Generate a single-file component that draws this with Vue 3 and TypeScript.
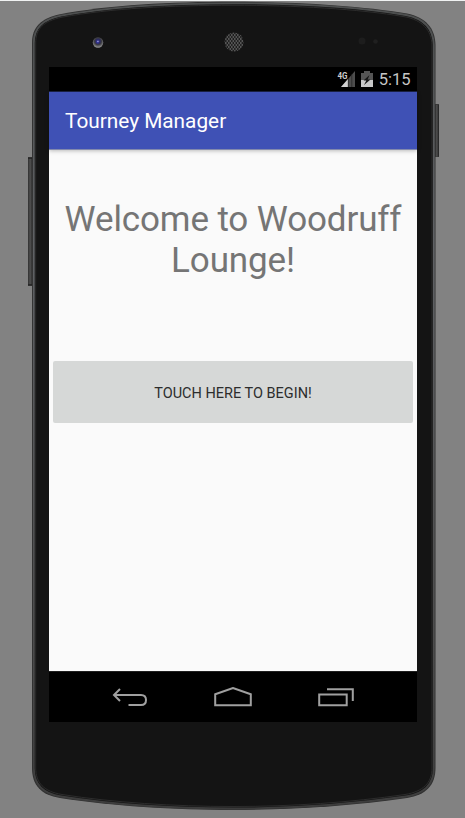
<script setup lang="ts">
const appTitle: string = 'Tourney Manager'
const clock: string = '5:15'
</script>

<template>
  <main class="stage">
    <svg class="device" viewBox="0 0 465 818" aria-hidden="true">
      <defs>
        <linearGradient id="side" x1="0" y1="0" x2="1" y2="0">
          <stop offset="0" stop-color="#303030" />
          <stop offset=".45" stop-color="#505050" />
          <stop offset="1" stop-color="#1e1e1e" />
        </linearGradient>
        <linearGradient id="rim" x1="0" y1="0" x2="0" y2="1">
          <stop offset="0" stop-color="#4c4e4e" />
          <stop offset=".3" stop-color="#606265" />
          <stop offset=".8" stop-color="#4c4c4c" />
          <stop offset="1" stop-color="#3c3c3c" />
        </linearGradient>
        <radialGradient id="lens" cx=".5" cy=".38" r=".62">
          <stop offset="0" stop-color="#5555b0" />
          <stop offset=".3" stop-color="#29295f" />
          <stop offset=".55" stop-color="#3c3c42" />
          <stop offset="1" stop-color="#9a9a9a" />
        </radialGradient>
        <pattern id="mesh" width="3" height="4" patternUnits="userSpaceOnUse">
          <rect width="3" height="4" fill="#555" />
          <circle cx=".8" cy="1" r=".9" fill="#171717" />
          <circle cx="2.3" cy="3" r=".9" fill="#171717" />
        </pattern>
      </defs>
      <rect x="28" y="157.500" width="5" height="128" fill="url(#side)" />
      <path d="M28 158h5M28 285h5M435 105h4M435 156h4" stroke="#222" stroke-width="1.500" />
      <rect x="435" y="105" width="4" height="51.500" fill="url(#side)" />
      <path
        d="M32 43C32 27 41 18.500 60 14.300C109 5 171 1.800 233 1.800C295 1.800 360 5.500 407 13.500C426 17.500 435 28 435.500 45V768C435.500 785 426 795 407 798C352 806 292 810 233 810C174 810 111 806 60 798C41 795 32 785 32 768Z"
        fill="#303030"
      />
      <path
        d="M33.800 43C33.800 28 42 19.800 61 15.700C110 6.500 171 3.300 233 3.300C295 3.300 359 7 406 15C424 18.500 433.300 29 433.800 45V768C433.800 784 425 793.500 406 796.500C351 804.500 292 808.500 233 808.500C174 808.500 112 804.500 61 796.500C42 793.500 33.800 784 33.800 768Z"
        fill="#141414"
        stroke="url(#rim)"
        stroke-width="1.800"
      />
      <path
        d="M35.700 43C35.700 29 43 21.300 62 17.200C111 8.300 171 5.300 233 5.300C295 5.300 358 8.800 405 16.800C422 20 431.500 30 432 45V768C432 783 423 791.500 405 794.500C350 802.500 292 806.500 233 806.500C174 806.500 113 802.500 62 794.500C44 791.500 35.700 783 35.700 768Z"
        fill="#141414"
        stroke="#2c2c2c"
        stroke-width="1"
      />
      <circle cx="98" cy="42.500" r="5.200" fill="url(#lens)" />
      <circle cx="97.700" cy="42" r="1.700" fill="#31318f" />
      <circle cx="97.900" cy="41.500" r=".8" fill="#a6a6e0" />
      <circle cx="234" cy="42" r="9.500" fill="url(#mesh)" />
      <circle cx="362" cy="41" r="3.500" fill="#1d1d1d" />
      <circle cx="375.500" cy="41.500" r="2.300" fill="#202020" />
    </svg>

    <section class="screen">
      <div class="status">
        <svg class="signal" viewBox="0 0 19 18" aria-hidden="true">
          <path d="M18 1v16H4Z" fill="#4d4d4d" />
          <path d="M11 9V17H4Z" fill="#d2d2d2" />
          <path d="M11.300 8v9M14.800 4v13" stroke="#222" stroke-width=".7" />
          <text x="0.500" y="8.600" class="network" textLength="10" lengthAdjust="spacingAndGlyphs">4G</text>
        </svg>
        <svg class="battery" viewBox="0 0 12 18" aria-hidden="true">
          <path d="M3 1h6v2h3v14H0V3h3Z" fill="#555" />
          <path d="M0 10h12v7H0Z" fill="#c8c8c8" />
          <path d="M8.500 5 2.500 10.500h2.800L3 15l6.500-5.500H6.700Z" fill="#161616" />
        </svg>
        <span class="clock">{{ clock }}</span>
      </div>
      <header class="appbar">{{ appTitle }}</header>
      <div class="content">
        <h1 class="welcome">Welcome to Woodruff<br />Lounge!</h1>
        <button class="begin" type="button">TOUCH HERE TO BEGIN!</button>
      </div>
      <nav class="navbar">
        <svg viewBox="0 0 36 24" aria-label="Back">
          <path d="M8 2 2 8l6 6M2.500 8H29c3 0 5 2 5 5s-2 5-5 5H16.500" />
        </svg>
        <svg class="home" viewBox="0 0 38 24" aria-label="Home">
          <path d="M1.200 18.200V7.200L19 1l17.800 6.200v11Z" />
        </svg>
        <svg viewBox="0 0 36 24" aria-label="Recent apps">
          <path d="M1.200 7.500h27.500v10.700H1.200ZM9 2.200h25.800V14" />
        </svg>
      </nav>
    </section>
  </main>
</template>

<style>
body {
  margin: 0;
  background: #828282;
}
</style>

<style scoped>
.stage {
  display: grid;
  width: 465px;
  height: 818px;
  box-sizing: border-box;
  overflow: hidden;
  background: linear-gradient(#f0f2f2 1px, #828282 1px);
  font-family: Roboto, sans-serif;
}

.device,
.screen {
  grid-area: 1 / 1;
}

.device {
  width: 465px;
  height: 818px;
}

.screen {
  display: flex;
  flex-direction: column;
  width: 368px;
  height: 655px;
  margin: 67px 0 0 49px;
  background: #fafafa;
}

.status {
  display: flex;
  align-items: center;
  justify-content: flex-end;
  height: 25px;
  box-sizing: border-box;
  padding-right: 6.500px;
  background: #000;
  border-bottom: 1px solid #1b2344;
}

.signal {
  width: 19px;
  height: 18px;
  margin-bottom: 1px;
}

.network {
  font: 700 9.500px Roboto, sans-serif;
  fill: #ccc;
  stroke: #000;
  stroke-width: 0.8px;
  paint-order: stroke;
}

.battery {
  width: 12px;
  height: 18px;
  margin: 0 6px 1px 5px;
}

.clock {
  color: #c6c6c6;
  font-size: 16.500px;
  line-height: 24px;
  padding-top: 2px;
}

.appbar {
  height: 57px;
  flex: none;
  padding-left: 16px;
  background: #3f51b5;
  border-bottom: 1px solid #8289ad;
  box-shadow: 0 1px 4px rgba(0, 0, 0, 0.25);
  color: #fff;
  font-size: 20.800px;
  line-height: 59px;
}

.content {
  display: flex;
  flex: 1;
  flex-direction: column;
  padding: 49px 4px 0;
}

.welcome {
  margin: 0;
  color: #757575;
  font-size: 35px;
  font-weight: 400;
  letter-spacing: -0.13px;
  line-height: 41px;
  text-align: center;
  white-space: nowrap;
}

.begin {
  height: 62px;
  margin-top: 80px;
  padding: 2px 0 0;
  border: 0;
  border-radius: 2px;
  background: #d6d8d7;
  color: #2c2d2d;
  font: 400 14.500px Roboto, sans-serif;
}

.navbar {
  display: flex;
  align-items: center;
  justify-content: space-between;
  height: 51px;
  box-sizing: border-box;
  padding: 3px 63px 0 63px;
  border-top: 1px solid #202020;
  background: #000;
}

.navbar svg {
  width: 36px;
  height: 24px;
  fill: none;
  stroke: #a0a0a0;
  stroke-width: 2;
}

.navbar .home {
  width: 38px;
  margin-right: 1px;
}
</style>
